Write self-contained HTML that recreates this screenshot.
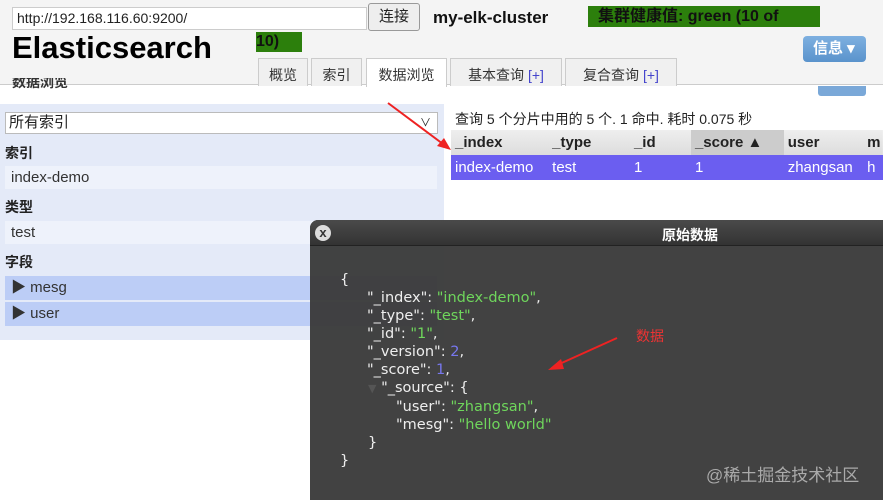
<!DOCTYPE html>
<html><head><meta charset="utf-8"><style>
*{margin:0;padding:0;box-sizing:border-box}
body{width:883px;height:500px;overflow:hidden;background:#fff;font-family:"Liberation Sans","Noto Sans CJK SC",sans-serif;position:relative}
.a{position:absolute;white-space:nowrap}
.hdr{left:0;top:0;width:883px;height:85px;background:#f4f4f4;border-bottom:1px solid #ccc}
.tab{top:58px;height:28px;border:1px solid #ccc;border-bottom:none;background:#f0f0f0;font-size:14px;color:#333;text-align:center;line-height:32px}
.lp{left:0;top:104px;width:444px;height:236px;background:#e4eaf8}
.lbl{left:5px;font-size:14px;font-weight:bold;color:#222}
.it{left:5px;width:432px;height:23px;font-size:15px;color:#333;padding-left:6px;line-height:23px}
th,td{font-size:15px;text-align:left;padding-left:4px;height:25px}
.dlg{left:310px;top:220px;width:573px;height:280px;background:rgba(58,58,58,.96);border-radius:8px 0 0 0}
.j{font-family:"DejaVu Sans","Noto Sans CJK SC",sans-serif;font-size:14.5px;color:#eee;left:340px}
.g{color:#6fd65c}.b{color:#7777ee}
</style></head><body>
<div class="a hdr"></div>
<div class="a" style="left:12px;top:7px;width:355px;height:23px;background:#fff;border:1px solid #ccc;font-size:14px;line-height:21px;padding-left:4px;color:#222">http://192.168.116.60:9200/</div>
<div class="a" style="left:368px;top:3px;width:52px;height:28px;background:#eee;border:1px solid #999;border-radius:3px;font-size:15px;text-align:center;line-height:26px;color:#222">连接</div>
<div class="a" style="left:433px;top:8px;font-size:17px;font-weight:bold;color:#111">my-elk-cluster</div>
<div class="a" style="left:588px;top:6px;width:232px;height:21px;background:#2c7f0c;font-size:16px;font-weight:bold;color:#111;padding-left:10px;line-height:21px;overflow:hidden">集群健康值: green (10 of</div>
<div class="a" style="left:256px;top:32px;width:46px;height:20px;background:#2c7f0c;font-size:16px;font-weight:bold;color:#111;line-height:20px">10)</div>
<div class="a" style="left:12px;top:30px;font-size:31px;font-weight:bold;color:#000">Elasticsearch</div>
<div class="a" style="left:803px;top:36px;width:63px;height:26px;background:linear-gradient(#7eb0e0,#5a93cc);border-radius:4px;color:#fff;font-size:15px;font-weight:bold;line-height:26px;padding-left:10px">信息 ▾</div>
<div class="a tab" style="left:258px;width:50px">概览</div>
<div class="a tab" style="left:311px;width:51px">索引</div>
<div class="a tab" style="left:366px;width:81px;background:#fff;height:29px">数据浏览</div>
<div class="a tab" style="left:450px;width:112px">基本查询 <span style="color:#44c">[+]</span></div>
<div class="a tab" style="left:565px;width:112px">复合查询 <span style="color:#44c">[+]</span></div>
<div class="a" style="left:12px;top:78px;font-size:14px;font-weight:bold;color:#333;height:16px;overflow:hidden;line-height:8px">数据浏览</div>
<div class="a" style="left:818px;top:86px;width:48px;height:10px;background:#7aa8d8;border-radius:0 0 3px 3px"></div>
<div class="a lp"></div>
<div class="a" style="left:5px;top:112px;width:433px;height:22px;background:#fff;border:1px solid #bbb;font-size:15px;line-height:20px;padding-left:3px;color:#222">所有索引<span style="position:absolute;right:6px;font-size:11px">∨</span></div>
<div class="a lbl" style="top:143px">索引</div>
<div class="a it" style="top:166px;background:#eef2fb">index-demo</div>
<div class="a lbl" style="top:197px">类型</div>
<div class="a it" style="top:221px;background:#eef2fb">test</div>
<div class="a lbl" style="top:252px">字段</div>
<div class="a it" style="top:276px;height:24px;background:#bccdf6">▶ mesg</div>
<div class="a it" style="top:302px;height:24px;background:#bccdf6">▶ user</div>
<div class="a" style="left:455px;top:109px;font-size:14px;color:#222">查询 5 个分片中用的 5 个. 1 命中. 耗时 0.075 秒</div>
<table class="a" style="left:451px;top:130px;border-collapse:collapse">
<tr style="background:linear-gradient(#eee,#ddd);font-weight:bold;color:#222"><th style="width:98px">_index</th><th style="width:84px">_type</th><th style="width:63px">_id</th><th style="width:94px;background:#ccc">_score ▲</th><th style="width:80px">user</th><th style="width:20px">m</th></tr>
<tr style="background:#6b5ef0;color:#fff"><td>index-demo</td><td>test</td><td>1</td><td>1</td><td>zhangsan</td><td>h</td></tr>
</table>
<svg class="a" style="left:385px;top:100px" width="70" height="55"><line x1="3" y1="3" x2="62" y2="47" stroke="#e22" stroke-width="2"/><polygon points="66,50 52,46 59,38" fill="#e22"/></svg>
<div class="a dlg"></div>
<div class="a" style="left:310px;top:220px;width:573px;height:26px;background:linear-gradient(#4a4a4a,#333);border-radius:8px 0 0 0;border-bottom:1px solid #222"></div>
<div class="a" style="left:315px;top:225px;width:16px;height:16px;border-radius:50%;background:#ddd;color:#333;font-size:13px;font-weight:bold;text-align:center;line-height:16px">x</div>
<div class="a" style="left:662px;top:225px;font-size:14px;font-weight:bold;color:#fff">原始数据</div>
<div class="a j" style="top:272px">{</div>
<div class="a j" style="top:290px;left:367px">"_index": <span class="g">"index-demo"</span>,</div>
<div class="a j" style="top:308px;left:367px">"_type": <span class="g">"test"</span>,</div>
<div class="a j" style="top:326px;left:367px">"_id": <span class="g">"1"</span>,</div>
<div class="a j" style="top:344px;left:367px">"_version": <span class="b">2</span>,</div>
<div class="a j" style="top:362px;left:367px">"_score": <span class="b">1</span>,</div>
<div class="a j" style="top:380px;left:368px"><span style="color:#555;font-size:11px">▼</span> "_source": {</div>
<div class="a j" style="top:399px;left:396px">"user": <span class="g">"zhangsan"</span>,</div>
<div class="a j" style="top:417px;left:396px">"mesg": <span class="g">"hello world"</span></div>
<div class="a j" style="top:435px;left:368px">}</div>
<div class="a j" style="top:453px">}</div>
<div class="a" style="left:636px;top:326px;font-size:14px;color:#e33">数据</div>
<svg class="a" style="left:545px;top:335px" width="75" height="40"><line x1="72" y1="3" x2="10" y2="31" stroke="#e22" stroke-width="2"/><polygon points="3,35 16,24 19,34" fill="#e22"/></svg>
<div class="a" style="left:706px;top:461px;font-size:17px;color:#aaa">@稀土掘金技术社区</div>
</body></html>
